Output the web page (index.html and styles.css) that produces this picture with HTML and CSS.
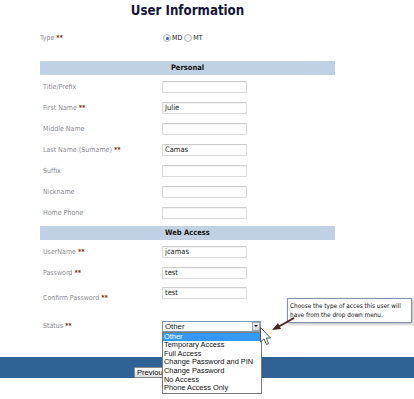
FILE: index.html
```html
<!DOCTYPE html>
<html lang="en">
<head>
<meta charset="utf-8">
<title>User Information</title>
<link rel="stylesheet" href="styles.css">
</head>
<body>
<div class="page">
  <h1 class="title">User Information</h1>
  <div class="form">
    <div class="row row-type">
      <div class="label label-type">Type <span class="req">**</span></div>
      <div class="radios">
        <span class="radio radio-on"></span><span class="radio-text">MD</span>
        <span class="radio"></span><span class="radio-text">MT</span>
      </div>
    </div>
    <div class="band">Personal</div>
    <div class="row"><div class="label">Title/Prefix</div><div class="input"></div></div>
    <div class="row"><div class="label">First Name <span class="req">**</span></div><div class="input">Julie</div></div>
    <div class="row"><div class="label">Middle Name</div><div class="input"></div></div>
    <div class="row"><div class="label">Last Name (Surname) <span class="req">**</span></div><div class="input">Camas</div></div>
    <div class="row"><div class="label">Suffix</div><div class="input"></div></div>
    <div class="row"><div class="label">Nickname</div><div class="input"></div></div>
    <div class="row"><div class="label">Home Phone</div><div class="input"></div></div>
    <div class="band band-2">Web Access</div>
    <div class="row"><div class="label">UserName <span class="req">**</span></div><div class="input">jcamas</div></div>
    <div class="row"><div class="label">Password <span class="req">**</span></div><div class="input">test</div></div>
    <div class="row row-tall"><div class="label">Confirm Password <span class="req">**</span></div><div class="input input-top">test</div></div>
    <div class="row row-status">
      <div class="label">Status <span class="req">**</span></div>
      <div class="select">
        <span class="select-text">Other</span>
        <span class="select-btn"><span class="tri"></span></span>
        <ul class="dropdown">
          <li class="opt opt-sel">Other</li>
          <li class="opt">Temporary Access</li>
          <li class="opt">Full Access</li>
          <li class="opt">Change Password and PIN</li>
          <li class="opt">Change Password</li>
          <li class="opt">No Access</li>
          <li class="opt">Phone Access Only</li>
        </ul>
      </div>
    </div>
  </div>
  <div class="footer-bar"><button class="btn">Previous</button></div>

  <div class="callout">Choose the type of acces this user will have from the drop down menu.</div>
  <svg class="arrow" width="30" height="20" viewBox="0 0 30 20">
    <line x1="25" y1="4" x2="9" y2="13" stroke="#4a2424" stroke-width="2"/>
    <polygon points="3,16 9,9 12,15" fill="#4a2424"/>
  </svg>
  <svg class="cursor" width="12" height="19" viewBox="0 0 12 19">
    <path d="M0.5,0.5 L0.5,15 L4,11.8 L6.5,17.5 L8.6,16.6 L6.2,11 L10.6,11 Z" fill="#fff" stroke="#555" stroke-width="1"/>
  </svg>
</div>
</body>
</html>
```
FILE: styles.css
```css
html, body {
  margin: 0;
  padding: 0;
  background: #fff;
}
.page {
  position: relative;
  width: 414px;
  height: 399px;
  overflow: hidden;
  font-family: "DejaVu Sans Condensed", "DejaVu Sans", sans-serif;
  font-stretch: condensed;
}
.title {
  margin: 0;
  height: 24px;
  line-height: 22px;
  text-align: center;
  width: 375px;
  font-size: 13.2px;
  font-weight: bold;
  color: #15153a;
}
.form {
  margin-left: 40px;
  width: 295px;
}
.row {
  display: grid;
  grid-template-columns: 123px 1fr;
  align-items: center;
  height: 21px;
}
.row-type {
  height: 28px;
  margin-bottom: 9px;
}
.row-tall {
  height: 30px;
}
.row-status {
  height: 26px;
}
.label {
  padding-left: 3px;
  font-size: 7px;
  color: #8a8a8e;
  white-space: nowrap;
}
.label-type {
  padding-left: 0;
}
.req {
  color: #6e2e14;
  font-weight: bold;
}
.radios {
  display: flex;
  align-items: center;
  gap: 1px;
  font-size: 7px;
  color: #222;
}
.radio {
  width: 6px;
  height: 6px;
  border: 1px solid #b8b8b8;
  border-radius: 50%;
  background: #f4f4f4;
  position: relative;
}
.radio-on::after {
  content: "";
  position: absolute;
  left: 1.5px;
  top: 1.5px;
  width: 3px;
  height: 3px;
  border-radius: 50%;
  background: #2a5fa8;
}
.radio-text {
  margin-right: 1px;
}
.band {
  height: 14px;
  line-height: 14px;
  background: #c0d1e3;
  text-align: center;
  font-size: 7.5px;
  font-weight: bold;
  color: #111;
  margin-bottom: 1px;
}
.band-2 {
  margin-top: 3px;
}
.input {
  box-sizing: border-box;
  width: 85px;
  height: 12px;
  margin-left: -1px;
  border: 1px solid #dcdcdc;
  border-top-color: #cfcfcf;
  border-radius: 1px;
  box-shadow: inset 0 1px 1px rgba(0, 0, 0, 0.05);
  font-size: 7.5px;
  line-height: 10px;
  padding-left: 2px;
  color: #1a1a1a;
}
.input-top {
  align-self: start;
  margin-top: 4px;
}
.select {
  position: relative;
  box-sizing: border-box;
  width: 99px;
  height: 11px;
  margin-left: -1px;
  border: 1px solid #7f9db9;
  background: #fff;
  font-family: "Liberation Sans", Arial, sans-serif;
  font-size: 7.8px;
  line-height: 9px;
  color: #111;
  display: flex;
  justify-content: space-between;
}
.select-text {
  padding-left: 2px;
}
.select-btn {
  box-sizing: border-box;
  width: 8px;
  height: 9px;
  background: linear-gradient(#f4f4f4, #d6d6d6);
  border: 1px solid #9aa6b6;
  display: flex;
  align-items: center;
  justify-content: center;
}
.tri {
  width: 0;
  height: 0;
  border-left: 2px solid transparent;
  border-right: 2px solid transparent;
  border-top: 2px solid #000;
}
.dropdown {
  position: absolute;
  left: -1px;
  top: 10px;
  z-index: 3;
  box-sizing: border-box;
  width: 100px;
  margin: 0;
  padding: 0;
  list-style: none;
  background: #fff;
  border: 1px solid #7a7a7a;
  font-size: 7.4px;
  color: #111;
}
.opt {
  height: 8.67px;
  line-height: 8.67px;
  padding-left: 1px;
  white-space: nowrap;
}
.opt-sel {
  background: #3399ff;
  color: #fff;
}
.footer-bar {
  margin-top: 18px;
  height: 21px;
  background: #2f6395;
  display: flex;
  align-items: flex-end;
  padding-left: 134px;
}
.btn {
  box-sizing: border-box;
  height: 11px;
  width: 45px;
  padding: 0 0 0 2px;
  text-align: left;
  font-family: "Liberation Sans", Arial, sans-serif;
  font-size: 7.6px;
  line-height: 9px;
  color: #111;
  background: linear-gradient(#fbfbfb, #dcdcdc);
  border: 1px solid #8a8a8a;
  border-radius: 1px;
}
.callout {
  position: absolute;
  left: 287px;
  top: 298px;
  box-sizing: border-box;
  width: 125px;
  height: 25px;
  padding: 3px 2px 0 2px;
  background: #fff;
  border: 1px solid #8593b0;
  box-shadow: 1px 1px 3px rgba(0, 0, 0, 0.35);
  font-size: 6.4px;
  line-height: 8.5px;
  color: #111;
}
.arrow {
  position: absolute;
  left: 269px;
  top: 314px;
}
.cursor {
  position: absolute;
  left: 260px;
  top: 327px;
  z-index: 4;
}
```
